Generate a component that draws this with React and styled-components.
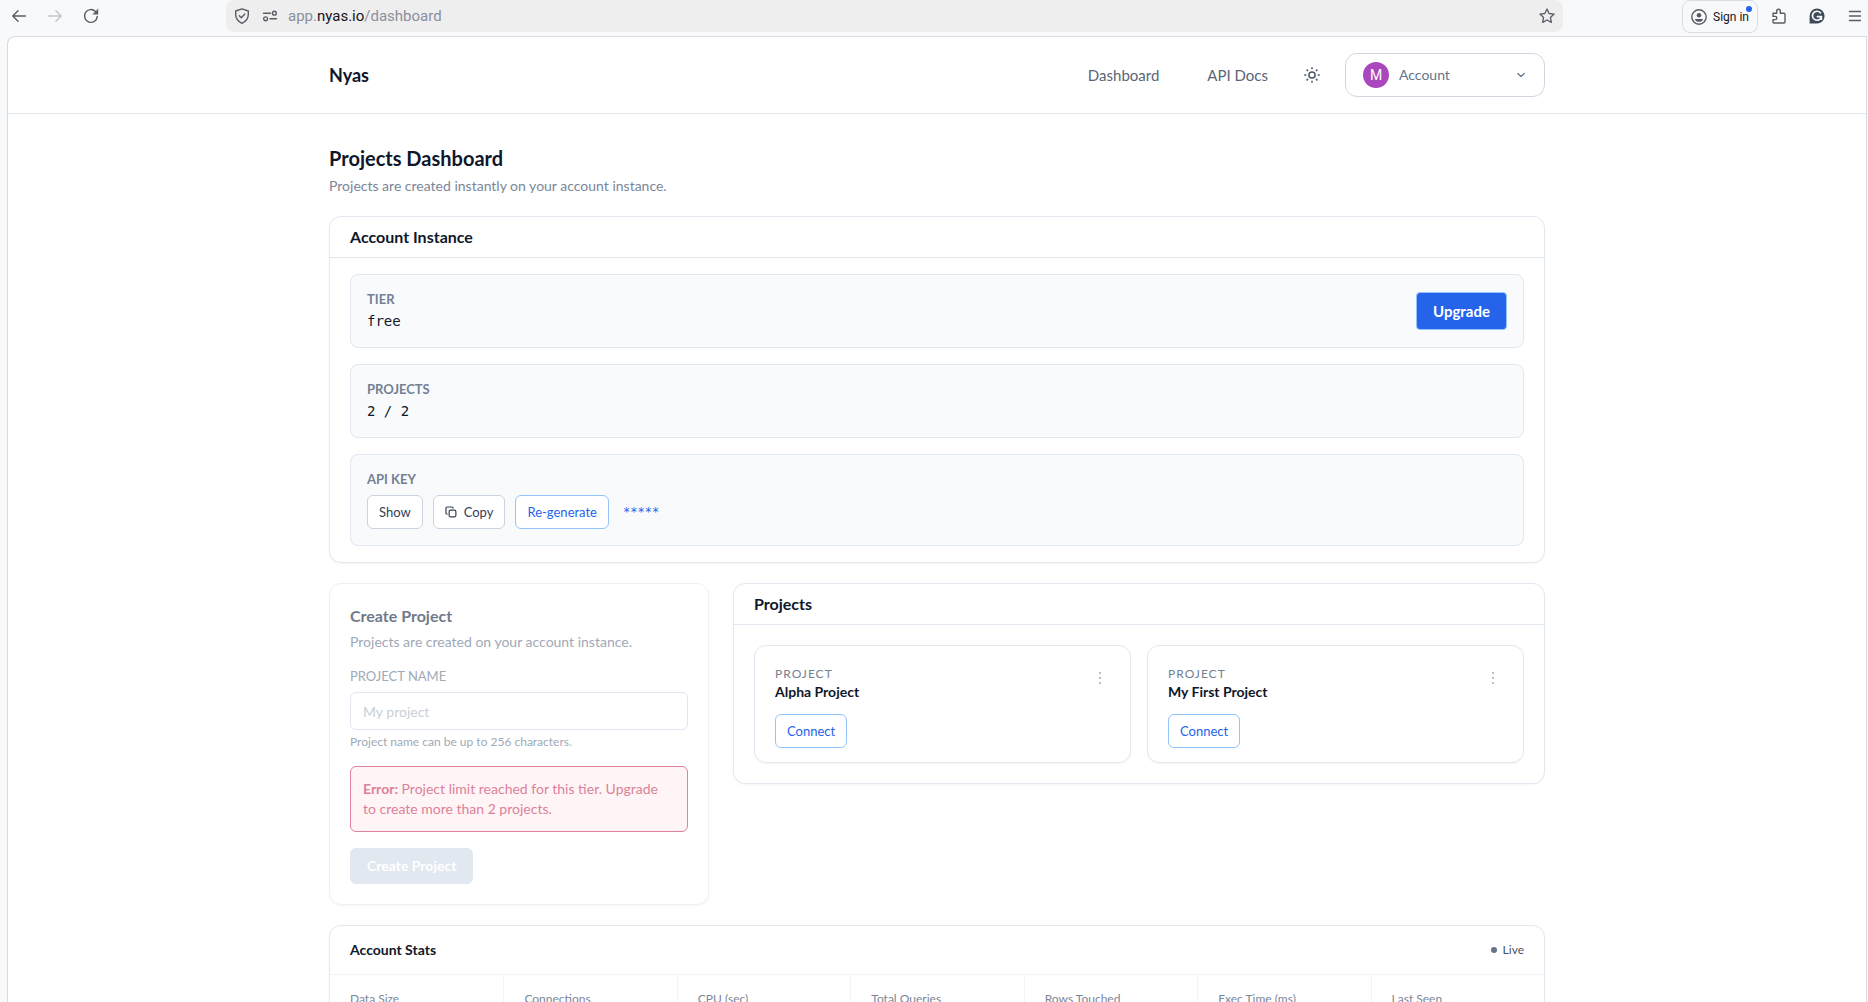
import styled, { createGlobalStyle, css } from 'styled-components';

const GlobalStyle = createGlobalStyle`
  *, *::before, *::after {
    box-sizing: border-box;
  }

  html, body, #root {
    height: 100%;
    margin: 0;
  }

  body {
    background: #f8f9fb;
    color: #0f172a;
    font-family: Lato, "Liberation Sans", sans-serif;
    font-size: 14px;
    line-height: 20px;
  }

  h1, h2, h3, p, ul {
    margin: 0;
    padding: 0;
  }

  button, input {
    font: inherit;
  }

  button {
    cursor: pointer;
    margin: 0;
    padding: 0;
  }
`;

/* ---------- browser window ---------- */

const Window = styled.div`
  display: flex;
  flex-direction: column;
  height: 100vh;
  overflow: hidden;
`;

const Toolbar = styled.div`
  display: flex;
  align-items: flex-start;
  flex: none;
  height: 36px;
  padding-right: 5px;
  font-family: Roboto, "Liberation Sans", sans-serif;
`;

const ToolButton = styled.button`
  display: flex;
  align-items: center;
  justify-content: center;
  width: 16px;
  height: 32px;
  border: 0;
  background: none;
  color: #5b5b66;

  &:disabled {
    color: #c3c3cb;
  }
`;

const NavButtons = styled.div`
  display: flex;
  gap: 20px;
  width: 226px;
  padding-left: 11px;
`;

const AddressBar = styled.div`
  display: flex;
  flex: 1;
  align-items: center;
  height: 32px;
  padding: 0 8px;
  border-radius: 8px;
  background: #eeeeef;
`;

const SiteButtons = styled.div`
  display: flex;
  gap: 12px;
  margin-right: 10px;
`;

const Address = styled.span`
  flex: 1;
  color: #8b8f9c;
  font-size: 15px;

  b {
    color: #15141a;
    font-weight: 400;
  }
`;

const ToolActions = styled.div`
  display: flex;
  gap: 22px;
  margin-left: 119px;
`;

const SignIn = styled.button`
  position: relative;
  display: flex;
  align-items: center;
  gap: 6px;
  height: 33px;
  margin-right: -9px;
  padding: 0 8px;
  border: 1px solid #dcdde2;
  border-radius: 8px;
  background: none;
  color: #15141a;
  font-size: 12px;

  svg {
    color: #5b5b66;
  }
`;

const SignInDot = styled.span`
  position: absolute;
  top: 5px;
  right: 5px;
  width: 6px;
  height: 6px;
  border-radius: 50%;
  background: #2563eb;
`;

const Page = styled.div`
  flex: 1;
  min-height: 0;
  margin: 0 1px 0 7px;
  border: 1px solid #d9dbe1;
  border-bottom: 0;
  border-radius: 8px 0 0 0;
  background: #fff;
  overflow: hidden;
`;

/* ---------- site header ---------- */

const container = css`
  width: 100%;
  max-width: 1280px;
  margin: 0 auto;
  padding: 0 32px;
`;

const Header = styled.header`
  border-bottom: 1px solid #e2e8f0;
`;

const HeaderInner = styled.div`
  ${container}
  display: flex;
  align-items: center;
  justify-content: space-between;
  height: 76px;
`;

const Brand = styled.a`
  color: #0f172a;
  font-size: 18px;
  font-weight: 700;
  text-decoration: none;
`;

const Nav = styled.nav`
  display: flex;
  align-items: center;
`;

const NavLink = styled.a`
  margin-right: 48px;
  color: #5a6577;
  font-size: 15px;
  text-decoration: none;

  & + & {
    margin-right: 36px;
  }
`;

const ThemeButton = styled.button`
  display: flex;
  margin-right: 25px;
  border: 0;
  background: none;
  color: #475569;
`;

const AccountButton = styled.button`
  display: flex;
  align-items: center;
  gap: 10px;
  width: 200px;
  height: 44px;
  padding: 0 18px 0 17px;
  border: 1px solid #d0d6e0;
  border-radius: 12px;
  background: #fff;
  color: #64748b;
  text-align: left;

  span:nth-child(2) {
    flex: 1;
  }
`;

const Avatar = styled.span`
  display: flex;
  align-items: center;
  justify-content: center;
  width: 26px;
  height: 26px;
  border-radius: 50%;
  background: #ab47bc;
  color: #fff;
  font-family: Roboto, sans-serif;
`;

/* ---------- dashboard ---------- */

const Main = styled.main`
  ${container}
  display: flex;
  flex-direction: column;
  gap: 20px;
  padding-top: 30px;
`;

const Title = styled.h1`
  font-size: 20px;
  font-weight: 700;
  line-height: 28px;
`;

const Muted = styled.p`
  margin-top: 4px;
  color: #7b8698;
`;

const Card = styled.section`
  border: 1px solid #e2e8f0;
  border-radius: 12px;
  background: #fff;
  box-shadow: 0 1px 2px rgba(15, 23, 42, 0.04);
`;

const CardTitle = styled.h2`
  padding: 8px 20px;
  border-bottom: 1px solid #e2e8f0;
  font-size: 16px;
  font-weight: 700;
  line-height: 24px;
`;

const InfoList = styled.div`
  display: flex;
  flex-direction: column;
  gap: 16px;
  padding: 16px 20px;
`;

const InfoBox = styled.div`
  display: flex;
  align-items: center;
  justify-content: space-between;
  padding: 16px;
  border: 1px solid #e2e8f0;
  border-radius: 8px;
  background: #f8fafc;
`;

const InfoLabel = styled.h3`
  color: #748094;
  font-size: 13px;
  font-weight: 700;
  line-height: 16px;
  text-transform: uppercase;
`;

const InfoValue = styled.p`
  margin-top: 4px;
  font-family: "DejaVu Sans Mono", monospace;
`;

const KeyRow = styled.div`
  display: flex;
  align-items: center;
  gap: 10px;
  margin-top: 8px;
`;

const SecretKey = styled.code`
  margin-left: 4px;
  color: #2563eb;
  font-family: "DejaVu Sans Mono", monospace;
  font-size: 12px;
`;

const OutlineButton = styled.button`
  display: inline-flex;
  align-items: center;
  gap: 7px;
  height: 34px;
  padding: 0 11px;
  border: 1px solid ${(p) => (p.$accent ? '#93c5fd' : '#cbd5e1')};
  border-radius: 6px;
  background: #fff;
  color: ${(p) => (p.$accent ? '#2563eb' : '#334155')};
  font-size: 13px;
`;

const SolidButton = styled.button`
  height: 38px;
  padding: 0 16px;
  border: 1px solid #93c5fd;
  border-radius: 4px;
  background: #2563eb;
  color: #fff;
  font-size: 15px;
  font-weight: 700;

  &:disabled {
    height: 36px;
    border-color: #e2e8f0;
    border-radius: 6px;
    background: #e2e8f0;
    font-size: 14px;
  }
`;

const Columns = styled.div`
  display: grid;
  grid-template-columns: 380px minmax(0, 1fr);
  align-items: start;
  gap: 24px;
`;

const CreateCard = styled(Card)`
  padding: 20px;
  border-color: #eef0f3;
`;

const CreateTitle = styled.h2`
  color: #6f7a8a;
  font-size: 16px;
  font-weight: 700;
  line-height: 24px;
`;

const CreateText = styled.p`
  margin-top: 4px;
  color: #a0a9b6;
`;

const FieldLabel = styled.label`
  display: block;
  margin-top: 16px;
  color: #a0a9b6;
  font-size: 13px;
  line-height: 16px;
`;

const Field = styled.input`
  display: block;
  width: 100%;
  height: 38px;
  margin-top: 8px;
  padding: 0 12px;
  border: 1px solid #e0e6f0;
  border-radius: 6px;
  background: #fff;

  &::placeholder {
    color: #c9cfd8;
  }
`;

const FieldHint = styled.p`
  margin-top: 4px;
  color: #a0a9b6;
  font-size: 12px;
  line-height: 16px;
`;

const ErrorBox = styled.p`
  margin: 16px 0;
  padding: 12px 24px 12px 12px;
  border: 1px solid #e0829a;
  border-radius: 6px;
  background: #fff5f6;
  color: #dc8199;
`;

const ProjectGrid = styled.div`
  display: grid;
  grid-template-columns: 1fr 1fr;
  gap: 16px;
  padding: 20px;
`;

const ProjectCard = styled(Card)`
  display: flex;
  align-items: flex-start;
  justify-content: space-between;
  padding: 20px 20px 14px;
`;

const Eyebrow = styled.p`
  color: #748094;
  font-size: 12px;
  line-height: 16px;
  letter-spacing: 1px;
`;

const ProjectName = styled.h3`
  margin-bottom: 12px;
  font-size: 14px;
  font-weight: 700;
`;

const MoreButton = styled.button`
  display: flex;
  justify-content: center;
  width: 20px;
  padding: 5px 0;
  border: 0;
  background: none;
  color: #a3abb8;
`;

const StatsHeader = styled.div`
  display: flex;
  align-items: center;
  justify-content: space-between;
  height: 49px;
  padding: 0 20px;
  border-bottom: 1px solid #f1f3f5;
`;

const StatsTitle = styled.h2`
  font-size: 14px;
  font-weight: 700;
`;

const Live = styled.span`
  display: flex;
  align-items: center;
  gap: 6px;
  color: #475569;
  font-size: 12px;

  &::before {
    content: '';
    width: 6px;
    height: 6px;
    border-radius: 50%;
    background: #64748b;
  }
`;

const StatsGrid = styled.ul`
  display: grid;
  grid-template-columns: repeat(7, 1fr);
  list-style: none;
`;

const Stat = styled.li`
  padding: 16px 20px 48px;
  color: #7b8698;
  font-size: 12px;
  line-height: 16px;

  & + & {
    border-left: 1px solid #f1f3f5;
  }
`;

/* ---------- icons ---------- */

const Icon = ({ size = 16, width = 1.4, children }) => (
  <svg
    width={size}
    height={size}
    viewBox="0 0 16 16"
    fill="none"
    stroke="currentColor"
    strokeWidth={width}
    strokeLinecap="round"
    strokeLinejoin="round"
    aria-hidden="true"
  >
    {children}
  </svg>
);

const BackIcon = () => (
  <Icon>
    <path d="M14.5 8H1.8M7 2.8 1.8 8 7 13.2" />
  </Icon>
);

const ForwardIcon = () => (
  <Icon>
    <path d="M1.5 8h12.7M9 2.8 14.2 8 9 13.2" />
  </Icon>
);

const ReloadIcon = () => (
  <Icon>
    <path d="M14.3 8.4A6.4 6.4 0 1 1 12.4 3.4" />
    <path d="M15 1.2v5H10z" fill="currentColor" strokeWidth="0.4" />
  </Icon>
);

const ShieldIcon = () => (
  <Icon>
    <path d="M8 .9 14.3 3v3.6c0 4-2.4 7-6.3 8.7C4.1 13.6 1.7 10.6 1.7 6.6V3z" />
    <path d="m5.3 7.8 2 2 3.5-3.7" />
  </Icon>
);

const SlidersIcon = () => (
  <Icon>
    <path d="M1.5 5.2h7M8 10.8h6.5" />
    <circle cx="12.4" cy="5.2" r="1.9" />
    <circle cx="3.6" cy="10.8" r="1.9" />
  </Icon>
);

const StarIcon = () => (
  <Icon width={1.3}>
    <path d="m8 1 2.1 4.5 5 .6-3.7 3.4 1 4.9L8 12l-4.4 2.4 1-4.9L.9 6.100l5-.6z" />
  </Icon>
);

const ProfileIcon = () => (
  <Icon>
    <circle cx="8" cy="8" r="7.2" />
    <circle cx="8" cy="6.2" r="2.3" fill="currentColor" stroke="none" />
    <path d="M3.8 9.9h8.4c-.6 1.9-2.2 2.9-4.2 2.900s-3.6-1-4.2-2.900z" fill="currentColor" stroke="none" />
  </Icon>
);

const PuzzleIcon = () => (
  <Icon>
    <path d="M2 5.2h3.700V3a1.800 1.800 0 0 1 3.600 0v2.200H13q1 0 1 1V14q0 1-1 1H3q-1 0-1-1v-2.400h2.200a1.600 1.600 0 0 0 0-3.200H2z" />
  </Icon>
);

const GrammarIcon = () => (
  <Icon>
    <path d="M8 .4A7.6 7.6 0 1 1 8 15.6H.6V8A7.5 7.5 0 0 1 8 .4z" fill="#3f4b57" stroke="none" />
    <path d="M11.4 4.8A4.5 4.5 0 1 0 12.4 8.6H8.4M12.4 8.6v2.6" stroke="#f8f9fb" strokeWidth="1.7" />
  </Icon>
);

const MenuIcon = () => (
  <Icon>
    <path d="M2.500 3.500h11M2.500 8h11M2.500 12.500h11" />
  </Icon>
);

const SunIcon = () => (
  <Icon width={1.5}>
    <circle cx="8" cy="8" r="3.1" />
    <path
      d="M8 .3v2M8 13.7v2M.3 8h2M13.7 8h2M2.6 2.6 4 4M12 12l1.4 1.4M2.6 13.4 4 12M12 4l1.4-1.4"
      strokeLinecap="butt"
    />
  </Icon>
);

const ChevronIcon = () => (
  <Icon size={10} width={2}>
    <path d="m3 5.5 5 5 5-5" />
  </Icon>
);

const CopyIcon = () => (
  <Icon size={12} width={1.6}>
    <rect x="5.5" y="5.5" width="9" height="9" rx="2" />
    <path d="M2.8 10.8c-.8 0-1.5-.7-1.5-1.5V3c0-1 .7-1.7 1.7-1.7h6.2c.9 0 1.6.7 1.6 1.5" />
  </Icon>
);

const DotsIcon = () => (
  <svg width="4" height="14" viewBox="0 0 4 14" fill="currentColor" aria-hidden="true">
    <circle cx="2" cy="2" r="1" />
    <circle cx="2" cy="7" r="1" />
    <circle cx="2" cy="12" r="1" />
  </svg>
);

/* ---------- sections ---------- */

const projects = ['Alpha Project', 'My First Project'];

const stats = [
  'Data Size',
  'Connections',
  'CPU (sec)',
  'Total Queries',
  'Rows Touched',
  'Exec Time (ms)',
  'Last Seen',
];

const BrowserToolbar = () => (
  <Toolbar>
    <NavButtons>
      <ToolButton aria-label="Back"><BackIcon /></ToolButton>
      <ToolButton aria-label="Forward" disabled><ForwardIcon /></ToolButton>
      <ToolButton aria-label="Reload"><ReloadIcon /></ToolButton>
    </NavButtons>
    <AddressBar>
      <SiteButtons>
        <ToolButton aria-label="Tracking protection"><ShieldIcon /></ToolButton>
        <ToolButton aria-label="Site settings"><SlidersIcon /></ToolButton>
      </SiteButtons>
      <Address>app.<b>nyas.io</b>/dashboard</Address>
      <ToolButton aria-label="Bookmark"><StarIcon /></ToolButton>
    </AddressBar>
    <ToolActions>
      <SignIn>
        <ProfileIcon />
        Sign in
        <SignInDot />
      </SignIn>
      <ToolButton aria-label="Extensions"><PuzzleIcon /></ToolButton>
      <ToolButton aria-label="Writing assistant"><GrammarIcon /></ToolButton>
      <ToolButton aria-label="Menu"><MenuIcon /></ToolButton>
    </ToolActions>
  </Toolbar>
);

const SiteHeader = () => (
  <Header>
    <HeaderInner>
      <Brand href="#home">Nyas</Brand>
      <Nav>
        <NavLink href="#dashboard">Dashboard</NavLink>
        <NavLink href="#docs">API Docs</NavLink>
        <ThemeButton aria-label="Toggle theme"><SunIcon /></ThemeButton>
        <AccountButton>
          <Avatar>M</Avatar>
          <span>Account</span>
          <ChevronIcon />
        </AccountButton>
      </Nav>
    </HeaderInner>
  </Header>
);

const AccountInstance = () => (
  <Card>
    <CardTitle>Account Instance</CardTitle>
    <InfoList>
      <InfoBox>
        <div>
          <InfoLabel>Tier</InfoLabel>
          <InfoValue>free</InfoValue>
        </div>
        <SolidButton>Upgrade</SolidButton>
      </InfoBox>
      <InfoBox>
        <div>
          <InfoLabel>Projects</InfoLabel>
          <InfoValue>2 / 2</InfoValue>
        </div>
      </InfoBox>
      <InfoBox>
        <div>
          <InfoLabel>API Key</InfoLabel>
          <KeyRow>
            <OutlineButton>Show</OutlineButton>
            <OutlineButton><CopyIcon />Copy</OutlineButton>
            <OutlineButton $accent>Re-generate</OutlineButton>
            <SecretKey>*****</SecretKey>
          </KeyRow>
        </div>
      </InfoBox>
    </InfoList>
  </Card>
);

const CreateProject = () => (
  <CreateCard>
    <CreateTitle>Create Project</CreateTitle>
    <CreateText>Projects are created on your account instance.</CreateText>
    <FieldLabel htmlFor="project-name">PROJECT NAME</FieldLabel>
    <Field id="project-name" type="text" placeholder="My project" disabled />
    <FieldHint>Project name can be up to 256 characters.</FieldHint>
    <ErrorBox role="alert">
      <strong>Error:</strong> Project limit reached for this tier. Upgrade to create more than 2 projects.
    </ErrorBox>
    <SolidButton disabled>Create Project</SolidButton>
  </CreateCard>
);

const ProjectList = () => (
  <Card>
    <CardTitle>Projects</CardTitle>
    <ProjectGrid>
      {projects.map((name) => (
        <ProjectCard as="article" key={name}>
          <div>
            <Eyebrow>PROJECT</Eyebrow>
            <ProjectName>{name}</ProjectName>
            <OutlineButton $accent>Connect</OutlineButton>
          </div>
          <MoreButton aria-label={`Options for ${name}`}><DotsIcon /></MoreButton>
        </ProjectCard>
      ))}
    </ProjectGrid>
  </Card>
);

const AccountStats = () => (
  <Card>
    <StatsHeader>
      <StatsTitle>Account Stats</StatsTitle>
      <Live>Live</Live>
    </StatsHeader>
    <StatsGrid>
      {stats.map((label) => (
        <Stat key={label}>{label}</Stat>
      ))}
    </StatsGrid>
  </Card>
);

const App = () => {
  return (
    <>
      <GlobalStyle />
      <Window>
        <BrowserToolbar />
        <Page>
          <SiteHeader />
          <Main>
            <div>
              <Title>Projects Dashboard</Title>
              <Muted>Projects are created instantly on your account instance.</Muted>
            </div>
            <AccountInstance />
            <Columns>
              <CreateProject />
              <ProjectList />
            </Columns>
            <AccountStats />
          </Main>
        </Page>
      </Window>
    </>
  );
};

export default App;
